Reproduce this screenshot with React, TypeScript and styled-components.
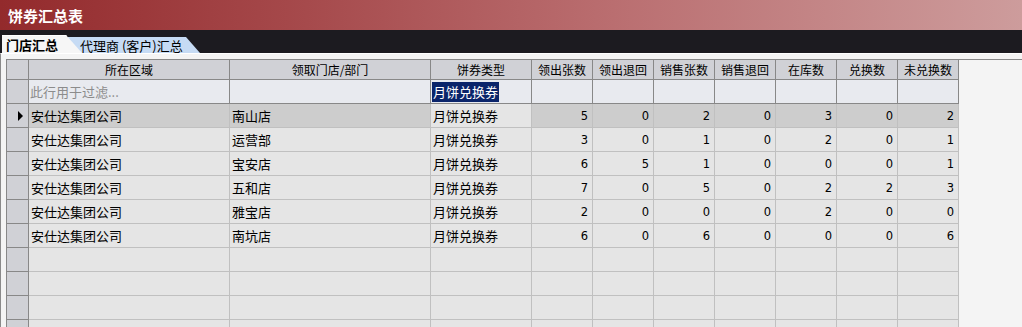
import React from "react";
import styled, { createGlobalStyle, css } from "styled-components";

const GlobalStyle = createGlobalStyle`
  html, body {
    margin: 0;
    padding: 0;
    background: #f4f4f4;
    overflow: hidden;
  }
  body {
    font-family: "Noto Sans CJK SC", "Liberation Sans", sans-serif;
  }
  * {
    box-sizing: border-box;
  }
`;

const Window = styled.div`
  width: 1022px;
  height: 327px;
  display: flex;
  flex-direction: column;
  overflow: hidden;
`;

const TitleBar = styled.div`
  height: 30px;
  flex: none;
  display: flex;
  align-items: center;
  padding-left: 8px;
  background: linear-gradient(to right, #932a2c 0%, #a64a4c 30%, #ba6e70 60%, #cd9c9c 100%);
  color: #fff;
  font-size: 15px;
  font-weight: 700;
  letter-spacing: 0;
`;

const TabStrip = styled.div`
  height: 23px;
  flex: none;
  background: #1c1b20;
  position: relative;
`;

const Tab = styled.div<{ $active?: boolean }>`
  position: absolute;
  bottom: 0;
  display: flex;
  align-items: center;
  font-size: 13px;
  line-height: 1;
  color: #000;
  ${({ $active }) =>
    $active
      ? css`
          left: 2px;
          width: 80px;
          height: 18px;
          padding-left: 4px;
          font-weight: 700;
          background: #f6f6f6;
          border-top: 1px solid #ffffff;
          z-index: 2;
          clip-path: polygon(0 0, 64px 0, 80px 100%, 0 100%);
        `
      : css`
          left: 68px;
          width: 132px;
          height: 16px;
          padding-left: 12px;
          background: #c6dbf4;
          z-index: 1;
          clip-path: polygon(0 0, 118px 0, 132px 100%, 0 100%);
        `}
`;

const Panel = styled.div`
  flex: 1;
  background: #f4f4f4;
  border-left: 1px solid #8a8a8a;
  border-top: 1px solid #ffffff;
  padding: 5px 0 0 5px;
`;

const GridWrap = styled.div`
  border-top: 1px solid #888;
  border-left: 1px solid #888;
`;

const Grid = styled.div`
  display: grid;
  grid-template-columns: 22px 201px 201px 101px repeat(7, 61px);
  width: max-content;
`;

const cellBase = css`
  height: 24px;
  display: flex;
  align-items: center;
  white-space: nowrap;
  overflow: hidden;
`;

const HeaderCell = styled.div`
  ${cellBase};
  height: 20px;
  justify-content: center;
  background: #d0d1d6;
  border-right: 1px solid #888;
  border-bottom: 1px solid #888;
  font-size: 12px;
  color: #000;
`;

const Indicator = styled.div`
  ${cellBase};
  justify-content: flex-end;
  padding-right: 5px;
  background: #d0d1d6;
  border-right: 1px solid #888;
  border-bottom: 1px solid #888;
`;

const Arrow = styled.span`
  width: 0;
  height: 0;
  border-top: 5px solid transparent;
  border-bottom: 5px solid transparent;
  border-left: 5px solid #000;
`;

const FilterCell = styled.div<{ $hint?: boolean }>`
  ${cellBase};
  padding-left: 1px;
  background: #e8eaef;
  border-right: 1px solid #888;
  border-bottom: 1px solid #888;
  font-size: 13px;
  color: ${({ $hint }) => ($hint ? "#8c8c8c" : "#000")};
`;

const Selected = styled.span`
  background: #0a246a;
  color: #fff;
  padding: 2px 1px;
  line-height: 16px;
`;

const Cell = styled.div<{ $current?: boolean; $focused?: boolean; $num?: boolean }>`
  ${cellBase};
  background: ${({ $current, $focused }) => ($current && !$focused ? "#cdcdcd" : "#e5e5e5")};
  border-right: 1px solid #c0c0c0;
  border-bottom: 1px solid #c0c0c0;
  color: #000;
  ${({ $num }) =>
    $num
      ? css`
          justify-content: flex-end;
          padding-right: 4px;
          font-family: "DejaVu Sans", "Liberation Sans", sans-serif;
          font-size: 11.5px;
        `
      : css`
          padding-left: 2px;
          font-size: 13px;
        `}
`;

const headers = ["所在区域", "领取门店/部门", "饼券类型", "领出张数", "领出退回", "销售张数", "销售退回", "在库数", "兑换数", "未兑换数"];

type Row = [string, string, string, number, number, number, number, number, number, number];

const rows: Row[] = [
  ["安仕达集团公司", "南山店", "月饼兑换券", 5, 0, 2, 0, 3, 0, 2],
  ["安仕达集团公司", "运营部", "月饼兑换券", 3, 0, 1, 0, 2, 0, 1],
  ["安仕达集团公司", "宝安店", "月饼兑换券", 6, 5, 1, 0, 0, 0, 1],
  ["安仕达集团公司", "五和店", "月饼兑换券", 7, 0, 5, 0, 2, 2, 3],
  ["安仕达集团公司", "雅宝店", "月饼兑换券", 2, 0, 0, 0, 2, 0, 0],
  ["安仕达集团公司", "南坑店", "月饼兑换券", 6, 0, 6, 0, 0, 0, 6],
];

const emptyRows = 4;

const App: React.FC = () => {
  return (
    <Window>
      <GlobalStyle />
      <TitleBar>饼券汇总表</TitleBar>
      <TabStrip>
        <Tab $active>门店汇总</Tab>
        <Tab>代理商 (客户)汇总</Tab>
      </TabStrip>
      <Panel>
        <GridWrap>
          <Grid>
            <HeaderCell />
            {headers.map((h) => (
              <HeaderCell key={h}>{h}</HeaderCell>
            ))}

            <Indicator />
            <FilterCell $hint>此行用于过滤...</FilterCell>
            <FilterCell />
            <FilterCell>
              <Selected>月饼兑换券</Selected>
            </FilterCell>
            {Array.from({ length: 7 }).map((_, i) => (
              <FilterCell key={i} />
            ))}

            {rows.map((row, r) => (
              <React.Fragment key={r}>
                <Indicator>{r === 0 && <Arrow />}</Indicator>
                {row.map((v, c) => (
                  <Cell key={c} $current={r === 0} $focused={c === 2} $num={c > 2}>
                    {v}
                  </Cell>
                ))}
              </React.Fragment>
            ))}

            {Array.from({ length: emptyRows }).map((_, r) => (
              <React.Fragment key={`e${r}`}>
                <Indicator />
                {headers.map((h) => (
                  <Cell key={h} />
                ))}
              </React.Fragment>
            ))}
          </Grid>
        </GridWrap>
      </Panel>
    </Window>
  );
};

export default App;
